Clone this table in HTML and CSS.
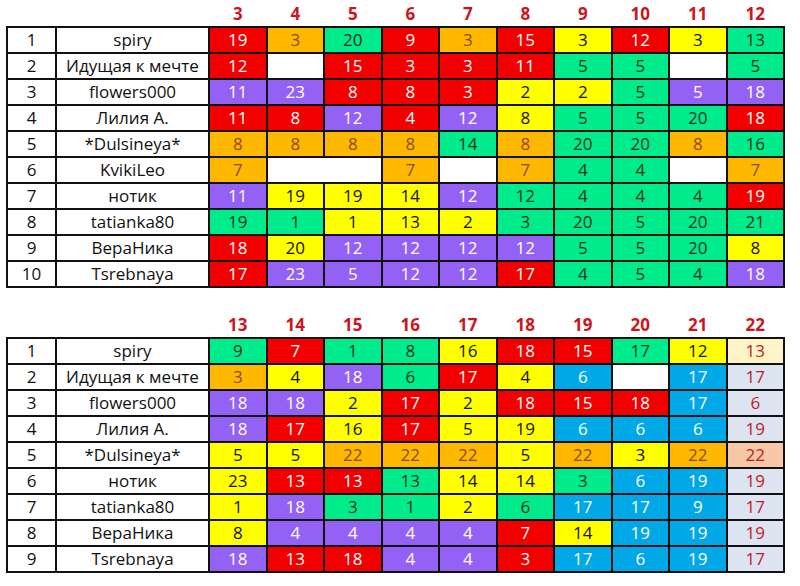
FILE: index.html
```html
<!DOCTYPE html>
<html lang="ru">
<head>
<meta charset="utf-8">
<title>Таблица</title>
<link rel="stylesheet" href="styles.css">
</head>
<body>
<table class="grid">
  <colgroup><col class="c-idx"><col class="c-name"><col span="10" class="c-d"></colgroup>
  <tr class="hdr"><th></th><th></th><th>3</th><th>4</th><th>5</th><th>6</th><th>7</th><th>8</th><th>9</th><th>10</th><th>11</th><th>12</th></tr>
  <tr><td>1</td><td>spiry</td><td class="r">19</td><td class="o">3</td><td class="g">20</td><td class="r">9</td><td class="o">3</td><td class="r">15</td><td class="y">3</td><td class="r">12</td><td class="y">3</td><td class="g">13</td></tr>
  <tr><td>2</td><td>Идущая к мечте</td><td class="r">12</td><td class="w"></td><td class="r">15</td><td class="r">3</td><td class="r">3</td><td class="r">11</td><td class="g">5</td><td class="g">5</td><td class="w"></td><td class="g">5</td></tr>
  <tr><td>3</td><td>flowers000</td><td class="p">11</td><td class="p">23</td><td class="r">8</td><td class="r">8</td><td class="r">3</td><td class="y">2</td><td class="y">2</td><td class="g">5</td><td class="p">5</td><td class="p">18</td></tr>
  <tr><td>4</td><td>Лилия А.</td><td class="r">11</td><td class="r">8</td><td class="p">12</td><td class="r">4</td><td class="p">12</td><td class="y">8</td><td class="g">5</td><td class="g">5</td><td class="g">20</td><td class="r">18</td></tr>
  <tr><td>5</td><td>*Dulsineya*</td><td class="o">8</td><td class="o">8</td><td class="o">8</td><td class="o">8</td><td class="g">14</td><td class="o">8</td><td class="g">20</td><td class="g">20</td><td class="o">8</td><td class="g">16</td></tr>
  <tr><td>6</td><td>KvikiLeo</td><td class="o">7</td><td class="w" colspan="2"></td><td class="o">7</td><td class="w"></td><td class="o">7</td><td class="g">4</td><td class="g">4</td><td class="w"></td><td class="o">7</td></tr>
  <tr><td>7</td><td>нотик</td><td class="p">11</td><td class="y">19</td><td class="y">19</td><td class="y">14</td><td class="p">12</td><td class="g">12</td><td class="g">4</td><td class="g">4</td><td class="g">4</td><td class="r">19</td></tr>
  <tr><td>8</td><td>tatianka80</td><td class="g">19</td><td class="g">1</td><td class="y">1</td><td class="y">13</td><td class="y">2</td><td class="g">3</td><td class="g">20</td><td class="g">5</td><td class="g">20</td><td class="g">21</td></tr>
  <tr><td>9</td><td>ВераНика</td><td class="r">18</td><td class="y">20</td><td class="p">12</td><td class="p">12</td><td class="p">12</td><td class="p">12</td><td class="g">5</td><td class="g">5</td><td class="g">20</td><td class="y">8</td></tr>
  <tr><td>10</td><td>Tsrebnaya</td><td class="r">17</td><td class="p">23</td><td class="p">5</td><td class="p">12</td><td class="p">12</td><td class="r">17</td><td class="g">4</td><td class="g">5</td><td class="g">4</td><td class="p">18</td></tr>
</table>

<table class="grid second">
  <colgroup><col class="c-idx"><col class="c-name"><col span="10" class="c-d"></colgroup>
  <tr class="hdr"><th></th><th></th><th>13</th><th>14</th><th>15</th><th>16</th><th>17</th><th>18</th><th>19</th><th>20</th><th>21</th><th>22</th></tr>
  <tr><td>1</td><td>spiry</td><td class="g">9</td><td class="r">7</td><td class="g">1</td><td class="g">8</td><td class="y">16</td><td class="r">18</td><td class="r">15</td><td class="g">17</td><td class="y">12</td><td class="cr">13</td></tr>
  <tr><td>2</td><td>Идущая к мечте</td><td class="o">3</td><td class="y">4</td><td class="p">18</td><td class="g">6</td><td class="r">17</td><td class="y">4</td><td class="b">6</td><td class="w"></td><td class="b">17</td><td class="lb">17</td></tr>
  <tr><td>3</td><td>flowers000</td><td class="p">18</td><td class="p">18</td><td class="y">2</td><td class="r">17</td><td class="y">2</td><td class="r">18</td><td class="r">15</td><td class="r">18</td><td class="b">17</td><td class="lb">6</td></tr>
  <tr><td>4</td><td>Лилия А.</td><td class="p">18</td><td class="r">17</td><td class="y">16</td><td class="r">17</td><td class="y">5</td><td class="y">19</td><td class="b">6</td><td class="b">6</td><td class="b">6</td><td class="lb">19</td></tr>
  <tr><td>5</td><td>*Dulsineya*</td><td class="y">5</td><td class="y">5</td><td class="o">22</td><td class="o">22</td><td class="o">22</td><td class="y">5</td><td class="o">22</td><td class="y">3</td><td class="o">22</td><td class="pe">22</td></tr>
  <tr><td>6</td><td>нотик</td><td class="y">23</td><td class="r">13</td><td class="r">13</td><td class="g">13</td><td class="y">14</td><td class="y">14</td><td class="g">3</td><td class="b">6</td><td class="b">19</td><td class="lb">19</td></tr>
  <tr><td>7</td><td>tatianka80</td><td class="y">1</td><td class="p">18</td><td class="g">3</td><td class="g">1</td><td class="y">2</td><td class="g">6</td><td class="b">17</td><td class="b">17</td><td class="b">9</td><td class="lb">17</td></tr>
  <tr><td>8</td><td>ВераНика</td><td class="y">8</td><td class="p">4</td><td class="p">4</td><td class="p">4</td><td class="p">4</td><td class="r">7</td><td class="y">14</td><td class="b">19</td><td class="b">19</td><td class="lb">19</td></tr>
  <tr><td>9</td><td>Tsrebnaya</td><td class="p">18</td><td class="r">13</td><td class="r">18</td><td class="p">4</td><td class="p">4</td><td class="r">3</td><td class="b">17</td><td class="b">6</td><td class="b">19</td><td class="lb">17</td></tr>
</table>
</body>
</html>
```

FILE: styles.css
```css
body {
  margin: 0;
  padding: 1px 0 0 6px;
  background: #fff;
  font-family: "Open Sans", "DejaVu Sans", sans-serif;
  color: #111;
}

.grid {
  border-collapse: collapse;
  table-layout: fixed;
  width: 777px;
}

.second {
  margin-top: 24px;
}

.c-idx { width: 49px; }
.c-name { width: 153px; }
.c-d { width: 57.5px; }

.grid tr { height: 26px; }

.grid td {
  border: 2px solid #111;
  padding: 0;
  text-align: center;
  vertical-align: middle;
  font-size: 17px;
  line-height: 20px;
  background: #fff;
  color: #111;
}

.hdr th {
  padding: 0;
  font-size: 17px;
  font-weight: 700;
  color: #cc1520;
  text-align: center;
  vertical-align: middle;
  line-height: 20px;
}

.grid td.r { background: #f20000; color: #fff; }
.grid td.o { background: #ffb800; color: #8a4a12; }
.grid td.g { background: #00ec8c; color: #10301c; }
.grid td.p { background: #9362f4; color: #fff; }
.grid td.y { background: #ffff00; color: #111; }
.grid td.b { background: #00a8e8; color: #fff; }
.grid td.w { background: #fff; }
.grid td.cr { background: #fff4c8; color: #c41820; }
.grid td.lb { background: #dce3f1; color: #c41820; }
.grid td.pe { background: #f8c8a6; color: #c41820; }
```
